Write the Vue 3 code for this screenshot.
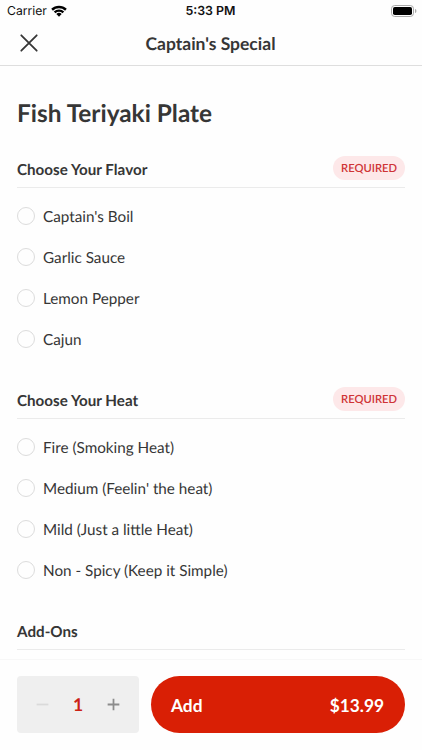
<script setup>
import { ref } from 'vue'

const groups = [
  { title: 'Choose Your Flavor', required: true, options: ["Captain's Boil", 'Garlic Sauce', 'Lemon Pepper', 'Cajun'] },
  {
    title: 'Choose Your Heat',
    required: true,
    options: ['Fire (Smoking Heat)', "Medium (Feelin' the heat)", 'Mild (Just a little Heat)', 'Non - Spicy (Keep it Simple)'],
  },
  { title: 'Add-Ons', required: false, options: [] },
]
const picked = ref({})
const quantity = ref(1)
</script>

<template>
  <div class="screen">
    <div class="status">
      <div class="carrier">
        <span>Carrier</span>
        <svg class="wifi" viewBox="0 0 15 11">
          <path d="M.2 3.500a10.500 10.500 0 0 1 14.600 0L13.200 5.200a8.200 8.200 0 0 0-11.400 0z" />
          <path d="M2.600 6a7 7 0 0 1 9.800 0l-1.600 1.600a4.800 4.800 0 0 0-6.600 0z" />
          <path d="M5 8.400a3.600 3.600 0 0 1 5 0L7.500 10.900z" />
        </svg>
      </div>
      <span class="time">5:33 PM</span>
      <svg class="battery" viewBox="0 0 26 12">
        <rect x=".5" y=".5" width="22" height="11" rx="3.2" fill="none" stroke="#aaa" />
        <rect x="2" y="2" width="19" height="8" rx="1.8" />
        <path d="M24 4v4c1.1-.4 1.4-1.1 1.4-2S25.100 4.400 24 4z" fill="#aaa" />
      </svg>
    </div>
    <header class="nav">
      <button class="close" aria-label="Close">
        <svg viewBox="0 0 18 18"><path d="M1.300 1.300 16.700 16.700M16.700 1.300 1.300 16.700" /></svg>
      </button>
      <span class="nav-title">Captain's Special</span>
    </header>
    <main class="content">
      <h1>Fish Teriyaki Plate</h1>
      <section v-for="g in groups" :key="g.title" class="group">
        <div class="group-head">
          <h2>{{ g.title }}</h2>
          <span v-if="g.required" class="badge">REQUIRED</span>
        </div>
        <div class="options">
          <label v-for="o in g.options" :key="o" class="option">
            <input v-model="picked[g.title]" type="radio" :name="g.title" :value="o" />
            <span>{{ o }}</span>
          </label>
        </div>
      </section>
    </main>
    <footer class="bar">
      <div class="stepper">
        <button class="minus" aria-label="Decrease" @click="quantity = Math.max(1, quantity - 1)">
          <svg viewBox="0 0 14 14"><path d="M.7 7h12.600" /></svg>
        </button>
        <span class="count">{{ quantity }}</span>
        <button class="plus" aria-label="Increase" @click="quantity++">
          <svg viewBox="0 0 14 14"><path d="M.7 7h12.600M7 .7v12.600" /></svg>
        </button>
      </div>
      <button class="add"><span>Add</span><span>${{ (13.99 * quantity).toFixed(2) }}</span></button>
    </footer>
  </div>
</template>

<style>
body {
  margin: 0;
  background: #fefefe;
}
</style>

<style scoped>
.screen {
  box-sizing: border-box;
  display: flex;
  flex-direction: column;
  width: 422px;
  height: 750px;
  overflow: hidden;
  background: #fefefe;
  color: #363636;
  font-family: Lato, "Liberation Sans", sans-serif;
  text-rendering: geometricPrecision;
}
button {
  padding: 0;
  border: 0;
  background: none;
  font: inherit;
  color: inherit;
}
svg {
  display: block;
}
.status {
  flex: none;
  display: grid;
  grid-template-columns: 1fr auto 1fr;
  align-items: center;
  height: 22px;
  padding: 0 5px 0 7px;
  color: #111;
  font: 12.200px/22px Inter, sans-serif;
}
.carrier {
  display: flex;
  align-items: center;
  gap: 4px;
}
.wifi {
  width: 16px;
  height: 12px;
}
.time {
  margin-right: 3px;
  font-size: 12.400px;
  font-weight: 600;
}
.battery {
  justify-self: end;
  width: 26px;
  height: 12px;
}
.nav {
  flex: none;
  box-sizing: border-box;
  display: grid;
  grid-template-columns: 40px 1fr 41px;
  align-items: center;
  height: 44px;
  padding-bottom: 1px;
  border-bottom: 1px solid #dedede;
}
.close {
  justify-self: end;
  width: 20px;
}
.close svg {
  width: 18px;
  height: 18px;
  fill: none;
  stroke: #363636;
  stroke-width: 1.8;
  stroke-linecap: round;
}
.nav-title {
  text-align: center;
  font-size: 17.500px;
  font-weight: 700;
}
.content {
  flex: 1;
  min-height: 0;
  overflow: hidden;
  padding: 31px 17px 0;
}
h1 {
  margin: 0 0 25px;
  font-size: 24.400px;
  line-height: 34px;
  font-weight: 700;
}
.group {
  height: 231px;
}
.group-head {
  box-sizing: border-box;
  display: flex;
  justify-content: space-between;
  align-items: flex-start;
  height: 32px;
  border-bottom: 1px solid #ebebeb;
}
h2 {
  margin: 0;
  font-size: 15.200px;
  line-height: 28px;
  font-weight: 700;
}
.badge {
  width: 72px;
  height: 24px;
  border-radius: 12px;
  background: #fde8e9;
  color: #cf3436;
  text-align: center;
  font-size: 11.200px;
  line-height: 26px;
  font-weight: 600;
}
.options {
  padding-top: 8px;
}
.option {
  display: flex;
  align-items: center;
  gap: 8px;
  height: 40.800px;
  font-size: 15.250px;
}
.option span {
  padding-top: 2px;
}
input {
  appearance: none;
  box-sizing: border-box;
  width: 18px;
  height: 18px;
  margin: 0;
  border: 1px solid #dcdcdc;
  border-radius: 50%;
}
.bar {
  flex: none;
  box-sizing: border-box;
  display: flex;
  gap: 12px;
  height: 91px;
  padding: 16px 17px;
  border-top: 1px solid #f7f7f7;
}
.stepper {
  box-sizing: border-box;
  display: flex;
  align-items: center;
  justify-content: space-between;
  width: 122px;
  height: 57px;
  padding: 0 19px;
  border-radius: 4px;
  background: #efefef;
}
.stepper svg {
  width: 13px;
  height: 13px;
  fill: none;
  stroke: #8c8c8c;
  stroke-width: 1.9;
}
.stepper .minus svg {
  stroke: #dadada;
}
.count {
  color: #cb2114;
  font-size: 17.500px;
  font-weight: 700;
}
.add {
  flex: 1;
  display: flex;
  align-items: center;
  justify-content: space-between;
  height: 57px;
  padding: 0 21px 0 20px;
  border-radius: 29px;
  background: #d91f05;
  color: #fff;
  font-size: 17.300px;
  font-weight: 700;
}
.add span {
  padding-top: 1px;
}
</style>
